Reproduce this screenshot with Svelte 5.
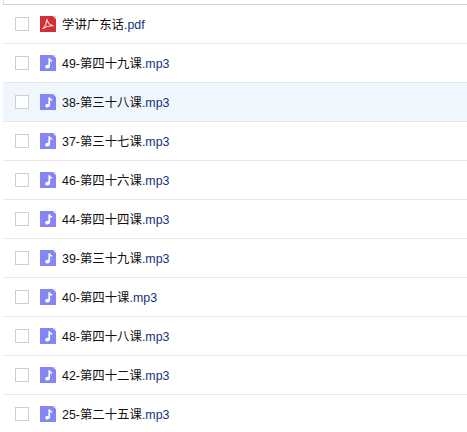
<script>
	const files = [
		{ name: '学讲广东话', ext: '.pdf', type: 'pdf' },
		{ name: '49-第四十九课', ext: '.mp3', type: 'mp3' },
		{ name: '38-第三十八课', ext: '.mp3', type: 'mp3', hover: true },
		{ name: '37-第三十七课', ext: '.mp3', type: 'mp3' },
		{ name: '46-第四十六课', ext: '.mp3', type: 'mp3' },
		{ name: '44-第四十四课', ext: '.mp3', type: 'mp3' },
		{ name: '39-第三十九课', ext: '.mp3', type: 'mp3' },
		{ name: '40-第四十课', ext: '.mp3', type: 'mp3' },
		{ name: '48-第四十八课', ext: '.mp3', type: 'mp3' },
		{ name: '42-第四十二课', ext: '.mp3', type: 'mp3' },
		{ name: '25-第二十五课', ext: '.mp3', type: 'mp3' }
	];
</script>

<div class="list">
	<div class="head"></div>
	{#each files as file}
		<div class="row" class:hover={file.hover}>
			<span class="check"></span>
			{#if file.type === 'pdf'}
				<svg class="icon" width="16" height="16" viewBox="0 0 16 16">
					<path d="M0 0h13l3 3v13H0z" fill="#d32f35" />
					<path d="M13 0l3 3V0z" fill="#f3c9c9" />
					<path d="M2.5 12.8c2.2-1.4 3.8-4.4 4.4-9.8.5 3.6 2.4 6 6.6 6.8-3.8-.3-7.6.6-11 3z" fill="none" stroke="#f5d6d6" stroke-width="1.2" />
				</svg>
			{:else}
				<svg class="icon" width="16" height="16" viewBox="0 0 16 16">
					<path d="M0 0h13l3 3v13H0z" fill="#8585f5" />
					<path d="M13 0l3 3V0z" fill="#e4e4fb" />
					<path d="M8.4 3.2h1.7c.1 1.3.9 1.9 2.1 2.1v1.5c-.9 0-1.6-.3-2.1-.7v5c0 1.4-1.2 2.4-2.7 2.4-1.3 0-2.2-.7-2.2-1.8 0-1.2 1.2-2 2.5-2 .3 0 .5 0 .7.1z" fill="#fff" />
				</svg>
			{/if}
			<span class="name">{file.name}<span class="ext">{file.ext}</span></span>
		</div>
	{/each}
</div>

<style>
	:global(body) {
		margin: 0;
		background: #fff;
		overflow: hidden;
	}

	.list {
		margin-left: 3px;
		font-family: "Liberation Sans", "Noto Sans CJK SC", sans-serif;
	}

	.head {
		height: 5px;
		box-sizing: border-box;
		border-left: 1px solid #dcdcdc;
		border-bottom: 1px solid #cfcfcf;
	}

	.row {
		display: flex;
		align-items: center;
		height: 38px;
		border-bottom: 1px solid #e8e8e8;
	}

	.row.hover {
		background: #f0f6fd;
	}

	.check {
		width: 12px;
		height: 12px;
		margin-left: 12px;
		border: 1px solid #cfcfcf;
		background: #fff;
	}

	.icon {
		margin-left: 11px;
		flex-shrink: 0;
	}

	.name {
		margin-left: 6px;
		margin-bottom: 1px;
		font-size: 12.4px;
		color: #111;
		white-space: nowrap;
	}

	.ext {
		color: #16307a;
	}
</style>
